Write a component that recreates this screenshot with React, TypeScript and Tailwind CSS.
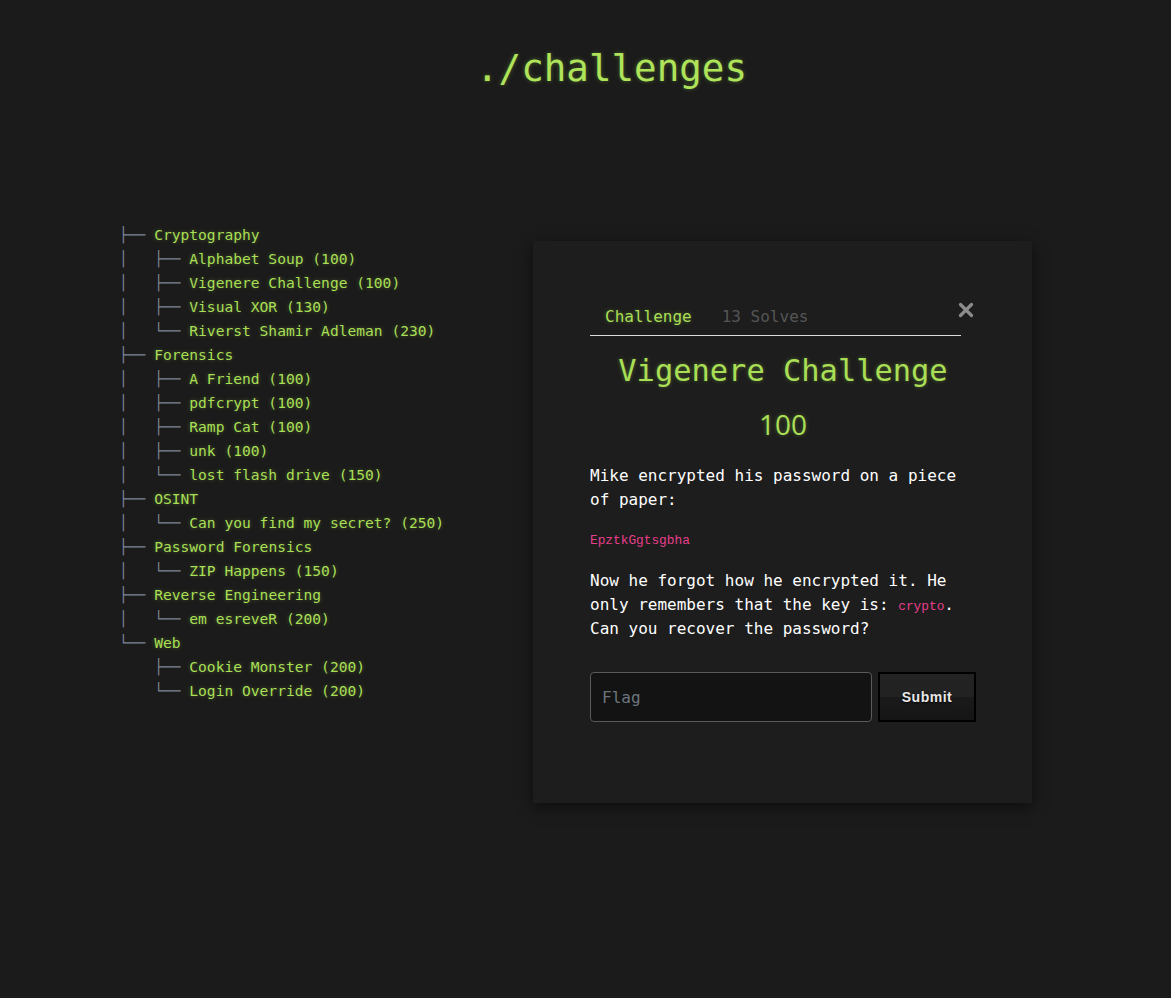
import { X } from 'lucide-react';

const mono = "font-['DejaVu_Sans_Mono','Liberation_Mono',monospace]";
const glow = '[text-shadow:0_0_4px_rgba(170,230,80,0.35)]';

type TreeRow = { prefix: string; label: string };

const treeRows: TreeRow[] = [
  { prefix: '├── ', label: 'Cryptography' },
  { prefix: '│   ├── ', label: 'Alphabet Soup (100)' },
  { prefix: '│   ├── ', label: 'Vigenere Challenge (100)' },
  { prefix: '│   ├── ', label: 'Visual XOR (130)' },
  { prefix: '│   └── ', label: 'Riverst Shamir Adleman (230)' },
  { prefix: '├── ', label: 'Forensics' },
  { prefix: '│   ├── ', label: 'A Friend (100)' },
  { prefix: '│   ├── ', label: 'pdfcrypt (100)' },
  { prefix: '│   ├── ', label: 'Ramp Cat (100)' },
  { prefix: '│   ├── ', label: 'unk (100)' },
  { prefix: '│   └── ', label: 'lost flash drive (150)' },
  { prefix: '├── ', label: 'OSINT' },
  { prefix: '│   └── ', label: 'Can you find my secret? (250)' },
  { prefix: '├── ', label: 'Password Forensics' },
  { prefix: '│   └── ', label: 'ZIP Happens (150)' },
  { prefix: '├── ', label: 'Reverse Engineering' },
  { prefix: '│   └── ', label: 'em esreveR (200)' },
  { prefix: '└── ', label: 'Web' },
  { prefix: '    ├── ', label: 'Cookie Monster (200)' },
  { prefix: '    └── ', label: 'Login Override (200)' },
];

function ChallengeTree() {
  return (
    <div className={`${mono} text-[14.6px] leading-[24px]`}>
      {treeRows.map((row, i) => (
        <div key={i} className="whitespace-pre">
          <span className="text-[#7b8596]">{row.prefix}</span>
          <span className={`text-[#a9df55] ${glow} cursor-pointer`}>{row.label}</span>
        </div>
      ))}
    </div>
  );
}

function ChallengeModal() {
  return (
    <div className="w-[499px] bg-[#1d1d1d] shadow-[0_4px_14px_rgba(0,0,0,0.55)] pt-[61px] pb-[81px] pl-[57px] pr-[56px]">
      {/* tabs */}
      <div className="flex items-start">
        <div className={`w-[371px] shrink-0 flex border-b border-[#dcdcdc] ${mono} text-[16px] leading-[24px]`}>
          <div className={`px-[15px] pt-[3px] pb-[6px] text-[#a9df55] ${glow}`}>Challenge</div>
          <div className="px-[15px] pt-[3px] pb-[6px] text-[#555555]">13 Solves</div>
        </div>
        <button className="-ml-[6px] -mt-[3px] text-[#8c8c8c]">
          <X className="w-[22px] h-[22px]" strokeWidth={3.5} />
        </button>
      </div>

      <h2 className={`mt-[17px] text-center ${mono} text-[30.4px] leading-[36px] text-[#a9df55] ${glow}`}>
        Vigenere Challenge
      </h2>
      <div className={`mt-[18px] text-center font-['Open_Sans',sans-serif] text-[28px] leading-[34px] text-[#a9df55] ${glow}`}>
        100
      </div>

      <div className={`mt-[23px] ${mono} text-[16px] leading-[24px] text-white`}>
        <p>Mike encrypted his password on a piece of paper:</p>
        <p className="mt-[15px]">
          <code className="text-[12.8px] leading-none text-[#e83e8c]">EpztkGgtsgbha</code>
        </p>
        <p className="mt-[18px]">
          Now he forgot how he encrypted it. He only remembers that the key is:{' '}
          <code className="text-[12.8px] leading-none text-[#e83e8c]">crypto</code>. Can you recover the password?
        </p>
      </div>

      <div className="mt-[31px] flex gap-[6px]">
        <input
          placeholder="Flag"
          className={`w-[282px] h-[50px] rounded-[4px] border border-[#5a5a5a] bg-[#131313] px-[11px] ${mono} text-[16px] text-white placeholder:text-[#6c757d] outline-none`}
        />
        <button className="w-[98px] h-[50px] border-2 border-black bg-[linear-gradient(#232323_0%,#222_50%,#1a1a1a_51%,#151515_100%)] font-['Liberation_Sans',sans-serif] text-[14px] font-bold tracking-[0.5px] text-[#e8e8e8] [text-shadow:0_1px_2px_rgba(0,0,0,0.9)]">
          Submit
        </button>
      </div>
    </div>
  );
}

export default function App() {
  return (
    <div className="min-h-[998px] bg-[#1b1b1b]">
      <div className="flex justify-center pl-[52px] pt-[43px]">
        <h1 className={`${mono} text-[37.5px] leading-[50px] text-[#aee35a] ${glow}`}>./challenges</h1>
      </div>

      <div className="flex pl-[119px] mt-[130px]">
        <div className="w-[414px]">
          <ChallengeTree />
        </div>
        <div className="mt-[18px]">
          <ChallengeModal />
        </div>
      </div>
    </div>
  );
}
